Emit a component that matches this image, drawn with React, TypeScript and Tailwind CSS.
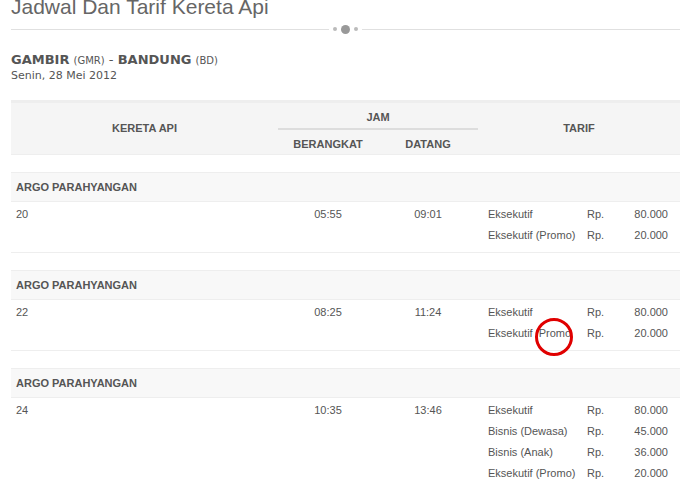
import React from "react";

type Fare = [string, string];
const groups: { no: string; dep: string; arr: string; fares: Fare[]; promo?: boolean }[] = [
  { no: "20", dep: "05:55", arr: "09:01", fares: [["Eksekutif", "80.000"], ["Eksekutif (Promo)", "20.000"]] },
  { no: "22", dep: "08:25", arr: "11:24", fares: [["Eksekutif", "80.000"], ["Eksekutif (Promo)", "20.000"]], promo: true },
  { no: "24", dep: "10:35", arr: "13:46", fares: [["Eksekutif", "80.000"], ["Bisnis (Dewasa)", "45.000"], ["Bisnis (Anak)", "36.000"], ["Eksekutif (Promo)", "20.000"]] },
];

export default function App() {
  return (
    <div className="w-[686px] h-[485px] overflow-hidden bg-white text-[#555] font-[family-name:Liberation_Sans,Arial,sans-serif]">
      <div className="pl-[11px] pr-[6px]">
        <h1 className="text-[21px] leading-[22px] text-[#666] -mt-[4px]">Jadwal Dan Tarif Kereta Api</h1>
        <div className="flex items-center h-[16px] mt-[3px]">
          <div className="flex-1 h-px bg-[#e0e0e0]" />
          <div className="flex items-center gap-[4px] px-[4px]">
            <span className="w-[4px] h-[4px] rounded-full bg-[#bbb]" />
            <span className="w-[9px] h-[9px] rounded-full bg-[#999]" />
            <span className="w-[4px] h-[4px] rounded-full bg-[#bbb]" />
          </div>
          <div className="w-[318px] h-px bg-[#e0e0e0]" />
        </div>
        <div className="mt-[15px] text-[13px] leading-[15px] font-[family-name:DejaVu_Sans,sans-serif] text-[#555]">
          <b>GAMBIR</b> <span className="text-[10px]">(GMR)</span> - <b>BANDUNG</b> <span className="text-[10px]">(BD)</span>
        </div>
        <div className="text-[11px] leading-[15px] font-[family-name:DejaVu_Sans,sans-serif] text-[#555]">Senin, 28 Mei 2012</div>

        <div className="mt-[17px] border-t-[3px] border-[#ddd] bg-[#f5f5f5] h-[55px] grid grid-cols-[267px_100px_100px_1fr] text-[11px] font-bold text-[#555] border-b border-[#eee]">
          <div className="row-span-2 flex items-center justify-center">KERETA API</div>
          <div className="col-span-2 flex items-center justify-center border-b-2 border-[#ddd] mt-[4px] h-[23px]">JAM</div>
          <div className="row-span-2 col-start-4 flex items-center justify-center">TARIF</div>
          <div className="col-start-2 flex items-center justify-center">BERANGKAT</div>
          <div className="flex items-center justify-center">DATANG</div>
        </div>

        {groups.map((g, i) => (
          <div key={i} className="mt-[17px] text-[11px]">
            <div className="h-[30px] bg-[#f8f8f8] border-t border-[#eee] border-b pl-[5px] flex items-center font-bold text-[#555]">ARGO PARAHYANGAN</div>
            <div className="grid grid-cols-[267px_100px_100px_1fr] border-b border-[#eee] pt-[2px] pb-[6px]">
              <div className="pl-[5px] leading-[21px]">{g.no}</div>
              <div className="text-center leading-[21px]">{g.dep}</div>
              <div className="text-center leading-[21px]">{g.arr}</div>
              <div className="pl-[10px]">
                {g.fares.map(([n, v], j) => (
                  <div key={j} className="flex leading-[21px] relative">
                    <span className="w-[99px]">
                      {g.promo && n === "Eksekutif (Promo)" ? (
                        <>Eksekutif <span className="relative">&nbsp;Promo<span className="absolute left-[-1px] top-[-9px] w-[38px] h-[38px] rounded-full border-[3px] border-[#e00000]" /></span></>
                      ) : n}
                    </span>
                    <span className="w-[40px]">Rp.</span>
                    <span className="w-[41px] text-right">{v}</span>
                  </div>
                ))}
              </div>
            </div>
          </div>
        ))}
      </div>
    </div>
  );
}
